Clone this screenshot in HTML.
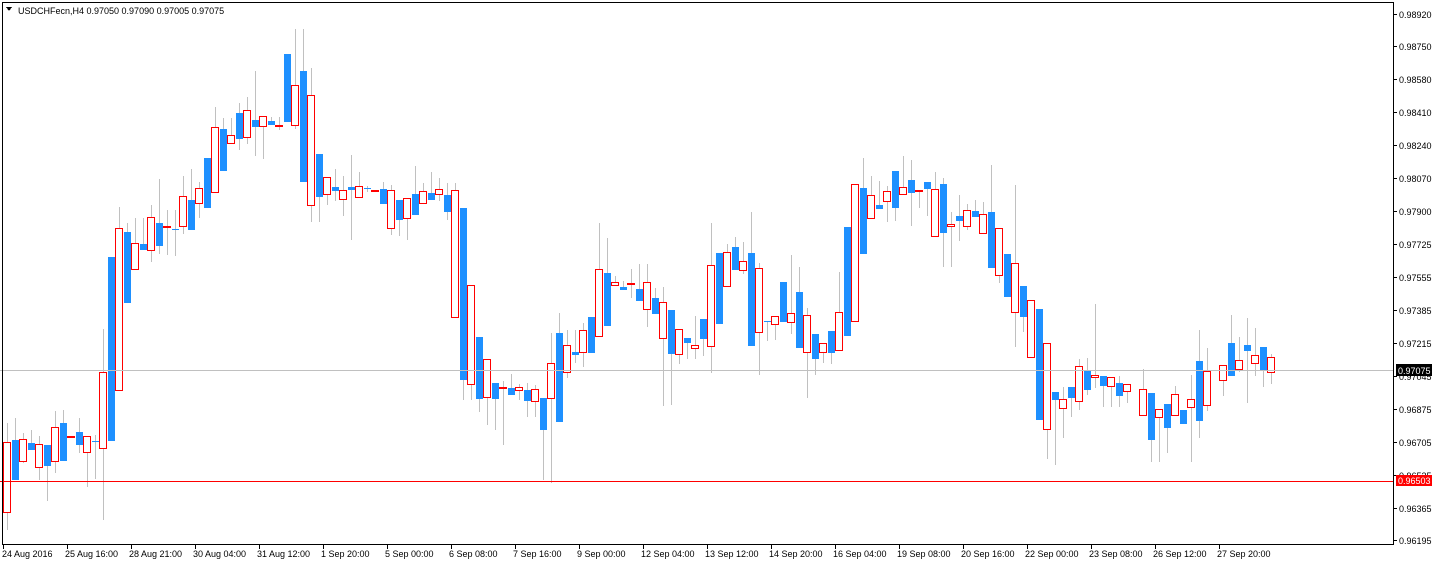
<!DOCTYPE html>
<html><head><meta charset="utf-8"><style>
html,body{margin:0;padding:0;background:#fff;width:1436px;height:562px;overflow:hidden}
svg{display:block}
text{font-family:"Liberation Sans",sans-serif;font-size:9px;fill:#000}
</style></head><body>
<svg id="s" width="1436" height="562" viewBox="0 0 1436 562" xmlns="http://www.w3.org/2000/svg" shape-rendering="crispEdges">
<rect x="0" y="0" width="1436" height="562" fill="#fff"/>
<g id="chart"></g>
<path d="M0 370.5H1393" stroke="#c0c0c0" stroke-width="1"/>
<path d="M0 481.5H1393" stroke="#ff0000" stroke-width="1"/>
<path d="M2.5 2V545M2 2.5H1393.5V544.5H2" stroke="#000" stroke-width="1" fill="none"/>
<g stroke="#000" stroke-width="1" id="ticks">
<path d="M1393 14.5h4M1393 46.5h4M1393 79.5h4M1393 112.5h4M1393 145.5h4M1393 178.5h4M1393 211.5h4M1393 244.5h4M1393 277.5h4M1393 310.5h4M1393 343.5h4M1393 376.5h4M1393 409.5h4M1393 442.5h4M1393 475.5h4M1393 508.5h4M1393 540.5h4"/>
<path d="M3.5 545v4M67.5 545v4M131.5 545v4M195.5 545v4M259.5 545v4M323.5 545v4M387.5 545v4M451.5 545v4M515.5 545v4M579.5 545v4M643.5 545v4M707.5 545v4M771.5 545v4M835.5 545v4M899.5 545v4M963.5 545v4M1027.5 545v4M1091.5 545v4M1155.5 545v4M1219.5 545v4"/>
</g>
<polygon points="6,7 12,7 9,11" fill="#000"/>
<text x="18" y="14">USDCHFecn,H4  0.97050 0.97090 0.97005 0.97075</text>
<g>
<text x="1399" y="18">0.98920</text>
<text x="1399" y="50">0.98750</text>
<text x="1399" y="83">0.98580</text>
<text x="1399" y="116">0.98410</text>
<text x="1399" y="149">0.98240</text>
<text x="1399" y="182">0.98070</text>
<text x="1399" y="215">0.97900</text>
<text x="1399" y="248">0.97725</text>
<text x="1399" y="281">0.97555</text>
<text x="1399" y="314">0.97385</text>
<text x="1399" y="347">0.97215</text>
<text x="1399" y="380">0.97045</text>
<text x="1399" y="413">0.96875</text>
<text x="1399" y="446">0.96705</text>
<text x="1399" y="479">0.96535</text>
<text x="1399" y="512">0.96365</text>
<text x="1399" y="544">0.96195</text>
</g>
<rect x="1396" y="364" width="36" height="12" fill="#000"/>
<text x="1398" y="374" style="fill:#fff">0.97075</text>
<rect x="1396" y="475" width="36" height="11" fill="#ff0000"/>
<text x="1398" y="484" style="fill:#fff">0.96503</text>
<g>
<text x="2" y="557">24 Aug 2016</text>
<text x="65" y="557">25 Aug 16:00</text>
<text x="129" y="557">28 Aug 21:00</text>
<text x="193" y="557">30 Aug 04:00</text>
<text x="257" y="557">31 Aug 12:00</text>
<text x="321" y="557">1 Sep 20:00</text>
<text x="385" y="557">5 Sep 00:00</text>
<text x="449" y="557">6 Sep 08:00</text>
<text x="513" y="557">7 Sep 16:00</text>
<text x="577" y="557">9 Sep 00:00</text>
<text x="641" y="557">12 Sep 04:00</text>
<text x="705" y="557">13 Sep 12:00</text>
<text x="769" y="557">14 Sep 20:00</text>
<text x="833" y="557">16 Sep 04:00</text>
<text x="897" y="557">19 Sep 08:00</text>
<text x="961" y="557">20 Sep 16:00</text>
<text x="1025" y="557">22 Sep 00:00</text>
<text x="1089" y="557">23 Sep 08:00</text>
<text x="1153" y="557">26 Sep 12:00</text>
<text x="1217" y="557">27 Sep 20:00</text>
</g>
</svg>
<script>
var D=[
[0,'r',442,512,423,530],[1,'b',440,480,418,480],[2,'r',439,461,433,463],[3,'b',443,450,430,450],
[4,'r',444,467,436,480],[5,'b',445,466,445,501],[6,'r',427,461,411,473],[7,'b',423,461,410,461],
[8,'r',436,436,436,436],[9,'b',432,445,418,453],[10,'r',436,452,436,487],[11,'b',441,442,435,479],
[12,'r',372,448,329,520],[13,'b',257,441,257,441],[14,'r',228,390,207,390],[15,'b',232,303,223,303],
[16,'r',243,269,218,269],[17,'b',244,250,218,250],[18,'r',217,250,205,262],[19,'b',223,246,179,254],
[20,'r',226,226,210,255],[21,'b',229,230,210,256],[22,'r',196,226,176,234],[23,'b',200,230,169,230],
[24,'r',188,203,182,218],[25,'b',158,208,158,208],[26,'r',127,192,107,192],[27,'b',129,171,118,171],
[28,'r',135,143,118,143],[29,'b',113,139,103,150],[30,'r',110,137,97,144],[31,'b',120,127,71,156],
[32,'r',116,126,116,159],[33,'b',121,125,117,125],[34,'r',125,125,117,130],[35,'b',54,122,54,122],
[36,'r',85,125,29,129],[37,'b',71,182,29,182],[38,'r',95,205,68,222],[39,'b',154,197,154,222],
[40,'r',177,194,177,205],[41,'b',187,191,169,201],[42,'r',190,199,176,216],[43,'b',187,190,155,240],
[44,'r',186,197,172,197],[45,'b',188,189,186,192],[46,'r',190,190,190,190],[47,'b',189,204,182,204],
[48,'r',190,228,185,235],[49,'b',200,220,200,236],[50,'r',198,218,198,240],[51,'b',194,215,166,215],
[52,'r',191,203,183,203],[53,'b',193,200,172,200],[54,'r',189,194,178,201],[55,'b',195,212,183,220],
[56,'r',190,317,183,317],[57,'b',208,380,208,400],[58,'r',285,384,285,400],[59,'b',337,399,337,412],
[60,'r',359,397,359,425],[61,'b',383,399,383,430],[62,'r',387,387,381,445],[63,'b',388,395,374,395],
[64,'r',387,390,384,400],[65,'b',390,401,383,417],[66,'r',389,401,385,417],[67,'b',398,430,398,480],
[68,'r',363,398,333,483],[69,'b',333,422,313,422],[70,'r',345,372,330,378],[71,'b',352,355,330,363],
[72,'r',330,352,323,367],[73,'b',317,353,317,353],[74,'r',269,336,223,336],[75,'b',273,326,238,326],
[76,'r',282,285,276,285],[77,'b',287,290,281,290],[78,'r',283,283,269,298],[79,'b',289,301,264,301],
[80,'r',282,309,264,327],[81,'b',298,314,288,314],[82,'r',302,338,287,406],[83,'b',310,354,310,405],
[84,'r',329,354,329,364],[85,'b',338,343,338,359],[86,'r',345,348,316,359],[87,'b',319,339,319,356],
[88,'r',265,346,223,373],[89,'b',253,324,253,324],[90,'r',252,286,244,286],[91,'b',247,270,237,270],
[92,'r',261,270,242,274],[93,'b',253,346,212,346],[94,'r',268,332,263,375],[95,'b',321,322,321,341],
[96,'r',316,324,316,340],[97,'b',282,322,282,322],[98,'r',313,322,255,334],[99,'b',292,348,267,348],
[100,'r',315,352,308,398],[101,'b',334,359,334,375],[102,'r',343,352,343,363],[103,'b',331,353,331,364],
[104,'r',312,350,272,350],[105,'b',227,336,227,336],[106,'r',184,321,184,321],[107,'b',188,254,158,254],
[108,'r',195,218,176,218],[109,'b',205,209,181,209],[110,'r',191,201,186,222],[111,'b',171,208,171,221],
[112,'r',187,194,156,194],[113,'b',180,193,160,226],[114,'r',190,190,190,208],[115,'b',182,189,182,216],
[116,'r',189,236,172,236],[117,'b',184,233,178,267],[118,'r',224,226,212,267],[119,'b',216,221,195,241],
[120,'r',210,226,204,230],[121,'b',211,217,200,217],[122,'r',214,233,202,233],[123,'b',212,268,165,268],
[124,'r',228,275,228,283],[125,'b',254,297,254,297],[126,'r',263,312,185,347],[127,'b',286,317,286,332],
[128,'r',300,357,300,357],[129,'b',309,420,309,420],[130,'r',343,429,343,459],[131,'b',392,400,392,465],
[132,'r',399,408,387,438],[133,'b',387,398,387,417],[134,'r',366,401,359,410],[135,'b',371,390,358,395],
[136,'r',375,377,304,388],[137,'b',376,386,376,407],[138,'r',377,386,377,407],[139,'b',383,396,376,407],
[140,'r',384,391,384,403],[142,'r',389,415,369,415],[143,'b',393,440,393,462],[144,'r',409,417,409,462],
[145,'b',404,428,404,453],[146,'r',394,415,386,415],[147,'b',410,424,410,424],[148,'r',399,407,375,462],
[149,'b',361,421,330,438],[150,'r',371,405,348,411],[152,'r',365,380,365,396],[153,'b',343,376,315,376],
[154,'r',360,369,337,372],[155,'b',345,351,318,403],[156,'r',355,363,328,376],[157,'b',347,371,347,387],
[158,'r',357,372,354,384]];
var wk='',bl='',rd='',dj='';
D.forEach(function(c){
 var L=3+8*c[0],t=c[2],b=c[3];
 if(c[5]>c[4]) wk+='M'+(L+4.5)+' '+c[4]+'V'+c[5];
 if(c[1]=='b'){ if(b-t<1)b=t+1; bl+='M'+(L+1)+' '+t+'h7V'+b+'h-7Z'; }
 else if(b-t<2){ dj+='M'+L+' '+(t+1)+'h8'; }
 else rd+='<rect x="'+(L+0.5)+'" y="'+(t+0.5)+'" width="7" height="'+(b-t)+'"/>';
});
document.getElementById('chart').innerHTML=
 '<path d="'+wk+'" stroke="#c0c0c0" stroke-width="1" fill="none"/>'+
 '<path d="'+bl+'" fill="#1e90ff"/>'+
 '<g fill="#fff" stroke="#ff0000" stroke-width="1">'+rd+'</g>'+
 '<path d="'+dj+'" stroke="#ff0000" stroke-width="2" fill="none"/>';
</script>
</body></html>
